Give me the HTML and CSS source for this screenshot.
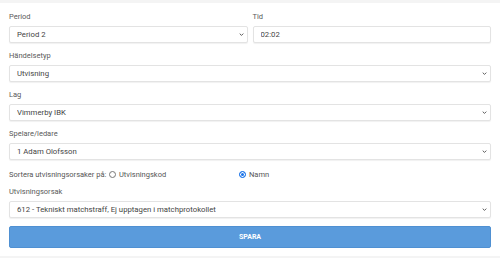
FILE: index.html
```html
<!DOCTYPE html>
<html lang="sv">

<head>
  <meta charset="UTF-8" />
  <title>Utvisning</title>
  <link rel="stylesheet" href="styles.css">
</head>

<body>
  <form class="card">
    <div class="row">
      <div class="group">
        <label>Period</label>
        <div class="field">
          <select>
            <option>Period 2</option>
          </select>
          <svg class="chev" viewBox="0 0 8 5"><path d="M1 1l3 3 3-3" /></svg>
        </div>
      </div>
      <div class="group">
        <label>Tid</label>
        <input type="text" value="02:02">
      </div>
    </div>

    <div class="group">
      <label>Händelsetyp</label>
      <div class="field">
        <select>
          <option>Utvisning</option>
        </select>
        <svg class="chev" viewBox="0 0 8 5"><path d="M1 1l3 3 3-3" /></svg>
      </div>
    </div>

    <div class="group">
      <label>Lag</label>
      <div class="field">
        <select>
          <option>Vimmerby IBK</option>
        </select>
        <svg class="chev" viewBox="0 0 8 5"><path d="M1 1l3 3 3-3" /></svg>
      </div>
    </div>

    <div class="group">
      <label>Spelare/ledare</label>
      <div class="field">
        <select>
          <option>1 Adam Olofsson</option>
        </select>
        <svg class="chev" viewBox="0 0 8 5"><path d="M1 1l3 3 3-3" /></svg>
      </div>
    </div>

    <div class="sort">
      <span class="sort-title">Sortera utvisningsorsaker på:</span>
      <span class="opt opt-first"><i class="radio"></i>Utvisningskod</span>
      <span class="opt"><i class="radio on"></i>Namn</span>
    </div>

    <div class="group">
      <label>Utvisningsorsak</label>
      <div class="field">
        <select>
          <option>612 - Tekniskt matchstraff, Ej upptagen i matchprotokollet</option>
        </select>
        <svg class="chev" viewBox="0 0 8 5"><path d="M1 1l3 3 3-3" /></svg>
      </div>
    </div>

    <button type="button" class="save">SPARA</button>
  </form>
</body>

</html>
```

FILE: styles.css
```css
* {
  padding: 0;
  margin: 0;
  box-sizing: border-box;
}

body {
  background: #f4f4f4;
  font-family: Roboto, "Liberation Sans", sans-serif;
  font-size: 7.5px;
  color: #555;
  padding-top: 3px;
}

.card {
  background: #fff;
  padding: 9px 9px 8px;
  display: flex;
  flex-direction: column;
}

.row {
  display: flex;
  gap: 5px;
}

.row .group {
  flex: 1;
}

.group {
  display: flex;
  flex-direction: column;
  margin-bottom: 8px;
}

.group label {
  line-height: 10px;
  margin-bottom: 4px;
  color: #5a5a5a;
}

.field {
  position: relative;
}

select,
input {
  appearance: none;
  width: 100%;
  height: 17px;
  border: 1px solid #e3e3e3;
  border-radius: 2px;
  box-shadow: 0 1px 1px rgba(0, 0, 0, 0.06);
  background: #fff;
  padding: 0 7px;
  font-family: inherit;
  font-size: 7.75px;
  color: #444;
  outline: none;
}

.chev {
  position: absolute;
  right: 4px;
  top: 7px;
  width: 5px;
  height: 3px;
}

.chev path {
  fill: none;
  stroke: #555;
  stroke-width: 1.6;
}

.sort {
  display: flex;
  align-items: center;
  height: 12px;
  margin-bottom: 7px;
}

.sort-title {
  flex-shrink: 0;
  width: 100px;
}

.opt {
  display: flex;
  align-items: center;
}

.opt-first {
  width: 130px;
}

.radio {
  width: 7px;
  height: 7px;
  border: 1px solid #777;
  border-radius: 50%;
  margin-right: 3px;
}

.radio.on {
  border-color: #1a73e8;
  background: #1a73e8;
  box-shadow: inset 0 0 0 1px #fff;
}

.save {
  height: 22px;
  background: #5a9bdc;
  border: 1px solid #4f90d2;
  border-radius: 2px;
  color: #fff;
  font-family: inherit;
  font-weight: bold;
  font-size: 7px;
}
```
